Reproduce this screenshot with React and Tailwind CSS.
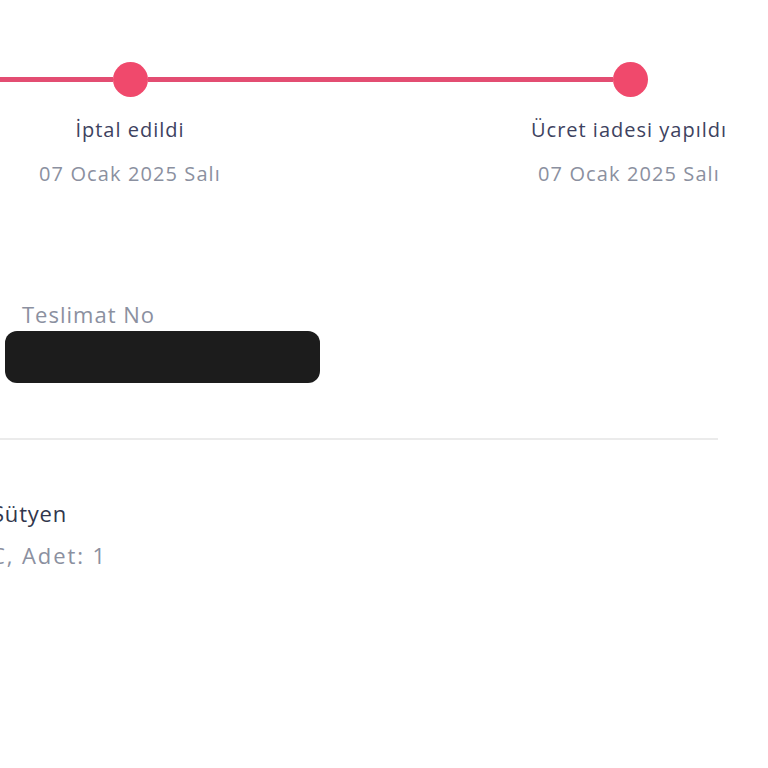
import React from 'react';

const steps = [
  { label: 'İptal edildi', date: '07 Ocak 2025 Salı' },
  { label: 'Ücret iadesi yapıldı', date: '07 Ocak 2025 Salı' },
];

const App = () => {
  return (
    <div className="h-[768px] w-[768px] overflow-hidden bg-white font-['Open_Sans',sans-serif]">
      {/* timeline */}
      <div className="mt-[62px] flex h-[35px] items-center pr-[120px]">
        <div className="h-[5px] w-[113px] bg-[#e34d72]" />
        <div className="h-[35px] w-[35px] shrink-0 rounded-full bg-[#f0496c]" />
        <div className="h-[5px] flex-1 bg-[#e34d72]" />
        <div className="h-[35px] w-[35px] shrink-0 rounded-full bg-[#f0496c]" />
      </div>
      <div className="mt-[20px] flex pr-[39px]">
        <div className="flex w-[260px] flex-col items-center">
          <span className="whitespace-nowrap text-[20px] leading-[26px] tracking-[1px] text-[#3d4260]">{steps[0].label}</span>
          <span className="mt-[18px] whitespace-nowrap text-[20px] leading-[26px] tracking-[1.1px] text-[#8b90a0]">{steps[0].date}</span>
        </div>
        <div className="flex-1" />
        <div className="flex w-[200px] flex-col items-center">
          <span className="whitespace-nowrap text-[20px] leading-[26px] tracking-[1px] text-[#3d4260]">{steps[1].label}</span>
          <span className="mt-[18px] whitespace-nowrap text-[20px] leading-[26px] tracking-[1.1px] text-[#8b90a0]">{steps[1].date}</span>
        </div>
      </div>

      {/* delivery info */}
      <div className="mt-[113px] pl-[22px]">
        <p className="text-[22px] leading-[28px] tracking-[1px] text-[#8b90a0]">Teslimat No</p>
      </div>
      <div className="ml-[5px] mt-[3px] h-[52px] w-[315px] rounded-[12px] bg-[#1c1c1c]" />
      <div className="mr-[50px] mt-[55px] h-[2px] bg-[#ebebeb]" />

      {/* product */}
      <div className="-ml-[8px] mt-[58px]">
        <p className="text-[22px] leading-[30px] tracking-[0.8px] text-[#31364c]">Sütyen</p>
        <p className="-ml-[1px] mt-[12px] whitespace-nowrap text-[22px] leading-[30px] tracking-[1.9px] text-[#8b90a0]">C, Adet: 1</p>
      </div>
    </div>
  );
};

export default App;
